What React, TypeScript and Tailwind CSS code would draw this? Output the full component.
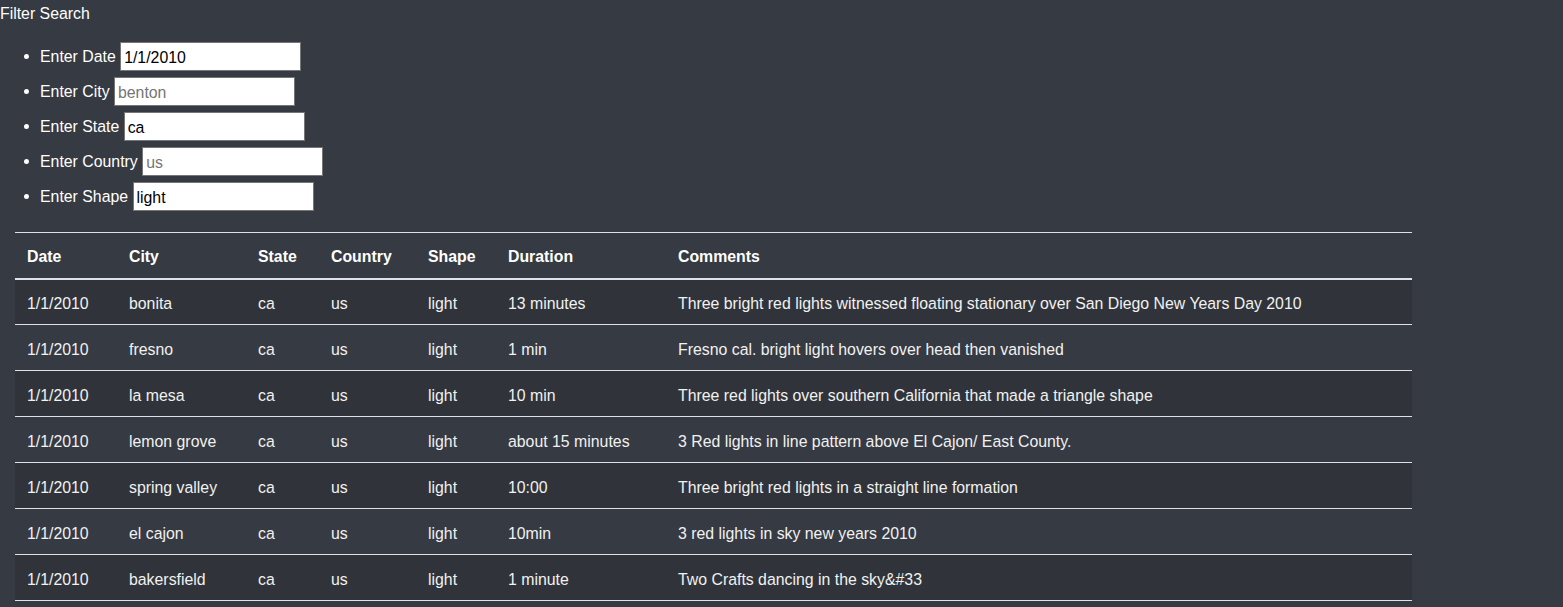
import React from "react";

const filters = [
  { label: "Enter Date", value: "1/1/2010", placeholder: "" },
  { label: "Enter City", value: "", placeholder: "benton" },
  { label: "Enter State", value: "ca", placeholder: "" },
  { label: "Enter Country", value: "", placeholder: "us" },
  { label: "Enter Shape", value: "light", placeholder: "" },
];

const sightings = [
  ["1/1/2010", "bonita", "ca", "us", "light", "13 minutes", "Three bright red lights witnessed floating stationary over San Diego New Years Day 2010"],
  ["1/1/2010", "fresno", "ca", "us", "light", "1 min", "Fresno cal. bright light hovers over head then vanished"],
  ["1/1/2010", "la mesa", "ca", "us", "light", "10 min", "Three red lights over southern California that made a triangle shape"],
  ["1/1/2010", "lemon grove", "ca", "us", "light", "about 15 minutes", "3 Red lights in line pattern above El Cajon/ East County."],
  ["1/1/2010", "spring valley", "ca", "us", "light", "10:00", "Three bright red lights in a straight line formation"],
  ["1/1/2010", "el cajon", "ca", "us", "light", "10min", "3 red lights in sky new years 2010"],
  ["1/1/2010", "bakersfield", "ca", "us", "light", "1 minute", "Two Crafts dancing in the sky&#33"],
];

const headers = ["Date", "City", "State", "Country", "Shape", "Duration", "Comments"];
const widths = ["w-[102px]", "w-[129px]", "w-[73px]", "w-[97px]", "w-[80px]", "w-[170px]", ""];

export default function App() {
  return (
    <div className="min-h-[607px] bg-[#363a42] text-white text-[15.85px] font-['Liberation_Sans',sans-serif]">
      <div className="leading-[28px]">Filter Search</div>
      <ul className="mt-[10px] pl-[40px] list-disc">
        {filters.map((f) => (
          <li key={f.label} className="h-[35px] leading-[35px]">
            <span className="relative top-[1px]">{f.label}</span>{" "}
            <input
              defaultValue={f.value}
              placeholder={f.placeholder}
              className="w-[181px] h-[29px] px-[3px] pt-[2px] align-middle bg-white text-black border border-[#767676] placeholder:text-[#757575] outline-none"
            />
          </li>
        ))}
      </ul>
      <div className="pl-[15px] pt-[19px] w-[1412px]">
        <table className="w-full border-collapse text-left">
          <thead>
            <tr className="border-t border-[#dee2e6] border-b-2">
              {headers.map((h, i) => (
                <th key={h} className={`h-[46px] px-[12px] pt-[4px] font-bold ${widths[i]}`}>
                  {h}
                </th>
              ))}
            </tr>
          </thead>
          <tbody>
            {sightings.map((row, r) => (
              <tr key={r} className={`border-b border-[#dee2e6] ${r % 2 === 0 ? "bg-[#30343a]" : ""}`}>
                {row.map((c, i) => (
                  <td key={i} className="h-[46px] px-[12px] pt-[4px] text-[#f1f1f1]">
                    {c}
                  </td>
                ))}
              </tr>
            ))}
          </tbody>
        </table>
      </div>
    </div>
  );
}
